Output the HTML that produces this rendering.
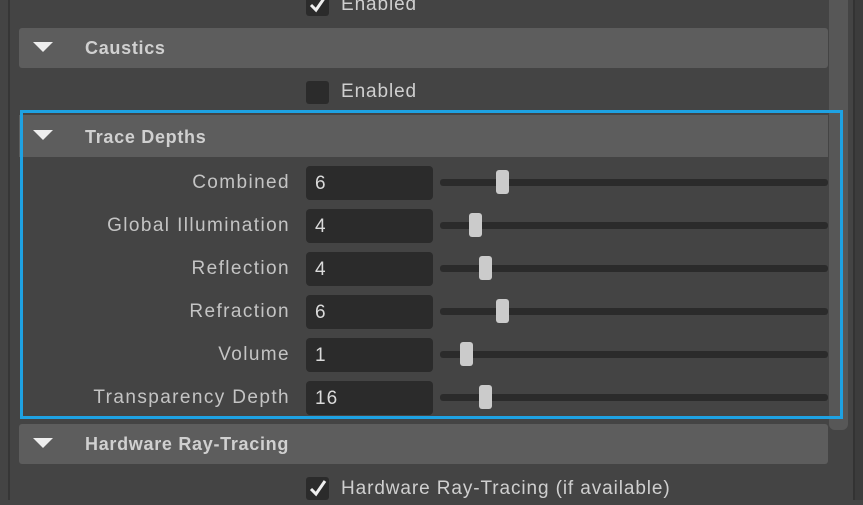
<!DOCTYPE html>
<html><head><style>
body{margin:0;width:863px;height:500px;background:#444;position:relative;overflow:hidden;font-family:"Liberation Sans",sans-serif;color:#c9c9c9;}
.a{position:absolute}
.hdr{position:absolute;left:19px;width:809px;height:40px;background:#5d5d5d;border-radius:3px;}
.hdr .tri{position:absolute;left:14px;top:14px;width:0;height:0;border-left:10px solid transparent;border-right:10px solid transparent;border-top:10px solid #eee;}
.hdr .t{position:absolute;left:66px;top:10px;font-size:18px;font-weight:bold;color:#d0d0d0;letter-spacing:0.7px}
.lbl{position:absolute;right:573px;font-size:19px;color:#c4c4c4;text-align:right;white-space:nowrap;letter-spacing:1.4px}
.fld{position:absolute;left:306px;width:127px;height:34px;background:#2b2b2b;border-radius:4px;}
.fld span{position:absolute;left:9px;top:7px;font-size:19px;color:#dadada;letter-spacing:1px}
.trk{position:absolute;left:440px;width:388px;height:7px;background:#2b2b2b;border-radius:3px}
.th{position:absolute;width:13px;height:24px;background:#cbcbcb;border-radius:3px}
.cb{position:absolute;left:306px;width:23px;height:23px;background:#2b2b2b;border-radius:3px}
.cbt{position:absolute;left:341px;font-size:19px;color:#cfcfcf;letter-spacing:0.9px}
</style></head><body>
<div class="a" style="left:8px;top:0;width:2px;height:500px;background:#363636"></div>
<div class="a" style="left:829px;top:0;width:19px;height:430px;background:#575757;border-radius:0 0 6px 6px"></div>
<div class="a" style="left:853px;top:0;width:2px;height:500px;background:#333"></div>
<div class="a" style="left:855px;top:0;width:8px;height:500px;background:#3c3c3c"></div>

<div class="cb" style="top:-7px"><svg width="23" height="23"><path d="M5 12 L10 17 L19 4" stroke="#eee" stroke-width="3" fill="none"/></svg></div>
<div class="cbt" style="top:-6px">Enabled</div>

<div class="hdr" style="top:28px"><div class="tri"></div><div class="t">Caustics</div></div>
<div class="cb" style="top:81px"></div>
<div class="cbt" style="top:81px">Enabled</div>

<div class="hdr" style="top:115px;height:42px;border-radius:0"><div class="tri" style="top:15px"></div><div class="t" style="top:12px">Trace Depths</div></div>

<div class="lbl" style="top:172px">Combined</div>
<div class="fld" style="top:166px"><span>6</span></div>
<div class="trk" style="top:179px"></div><div class="th" style="left:496px;top:170px"></div>

<div class="lbl" style="top:215px">Global Illumination</div>
<div class="fld" style="top:209px"><span>4</span></div>
<div class="trk" style="top:222px"></div><div class="th" style="left:469px;top:213px"></div>

<div class="lbl" style="top:258px">Reflection</div>
<div class="fld" style="top:252px"><span>4</span></div>
<div class="trk" style="top:265px"></div><div class="th" style="left:479px;top:256px"></div>

<div class="lbl" style="top:301px">Refraction</div>
<div class="fld" style="top:295px"><span>6</span></div>
<div class="trk" style="top:308px"></div><div class="th" style="left:496px;top:299px"></div>

<div class="lbl" style="top:344px">Volume</div>
<div class="fld" style="top:338px"><span>1</span></div>
<div class="trk" style="top:351px"></div><div class="th" style="left:460px;top:342px"></div>

<div class="lbl" style="top:387px">Transparency Depth</div>
<div class="fld" style="top:381px"><span>16</span></div>
<div class="trk" style="top:394px"></div><div class="th" style="left:479px;top:385px"></div>

<div class="a" style="left:20px;top:110px;width:817px;height:303px;border:3px solid #1ea2e3"></div>

<div class="hdr" style="top:424px"><div class="tri"></div><div class="t">Hardware Ray-Tracing</div></div>
<div class="cb" style="top:477px"><svg width="23" height="23"><path d="M5 12 L10 17 L19 4" stroke="#eee" stroke-width="3" fill="none"/></svg></div>
<div class="cbt" style="top:478px">Hardware Ray-Tracing (if available)</div>
</body></html>
